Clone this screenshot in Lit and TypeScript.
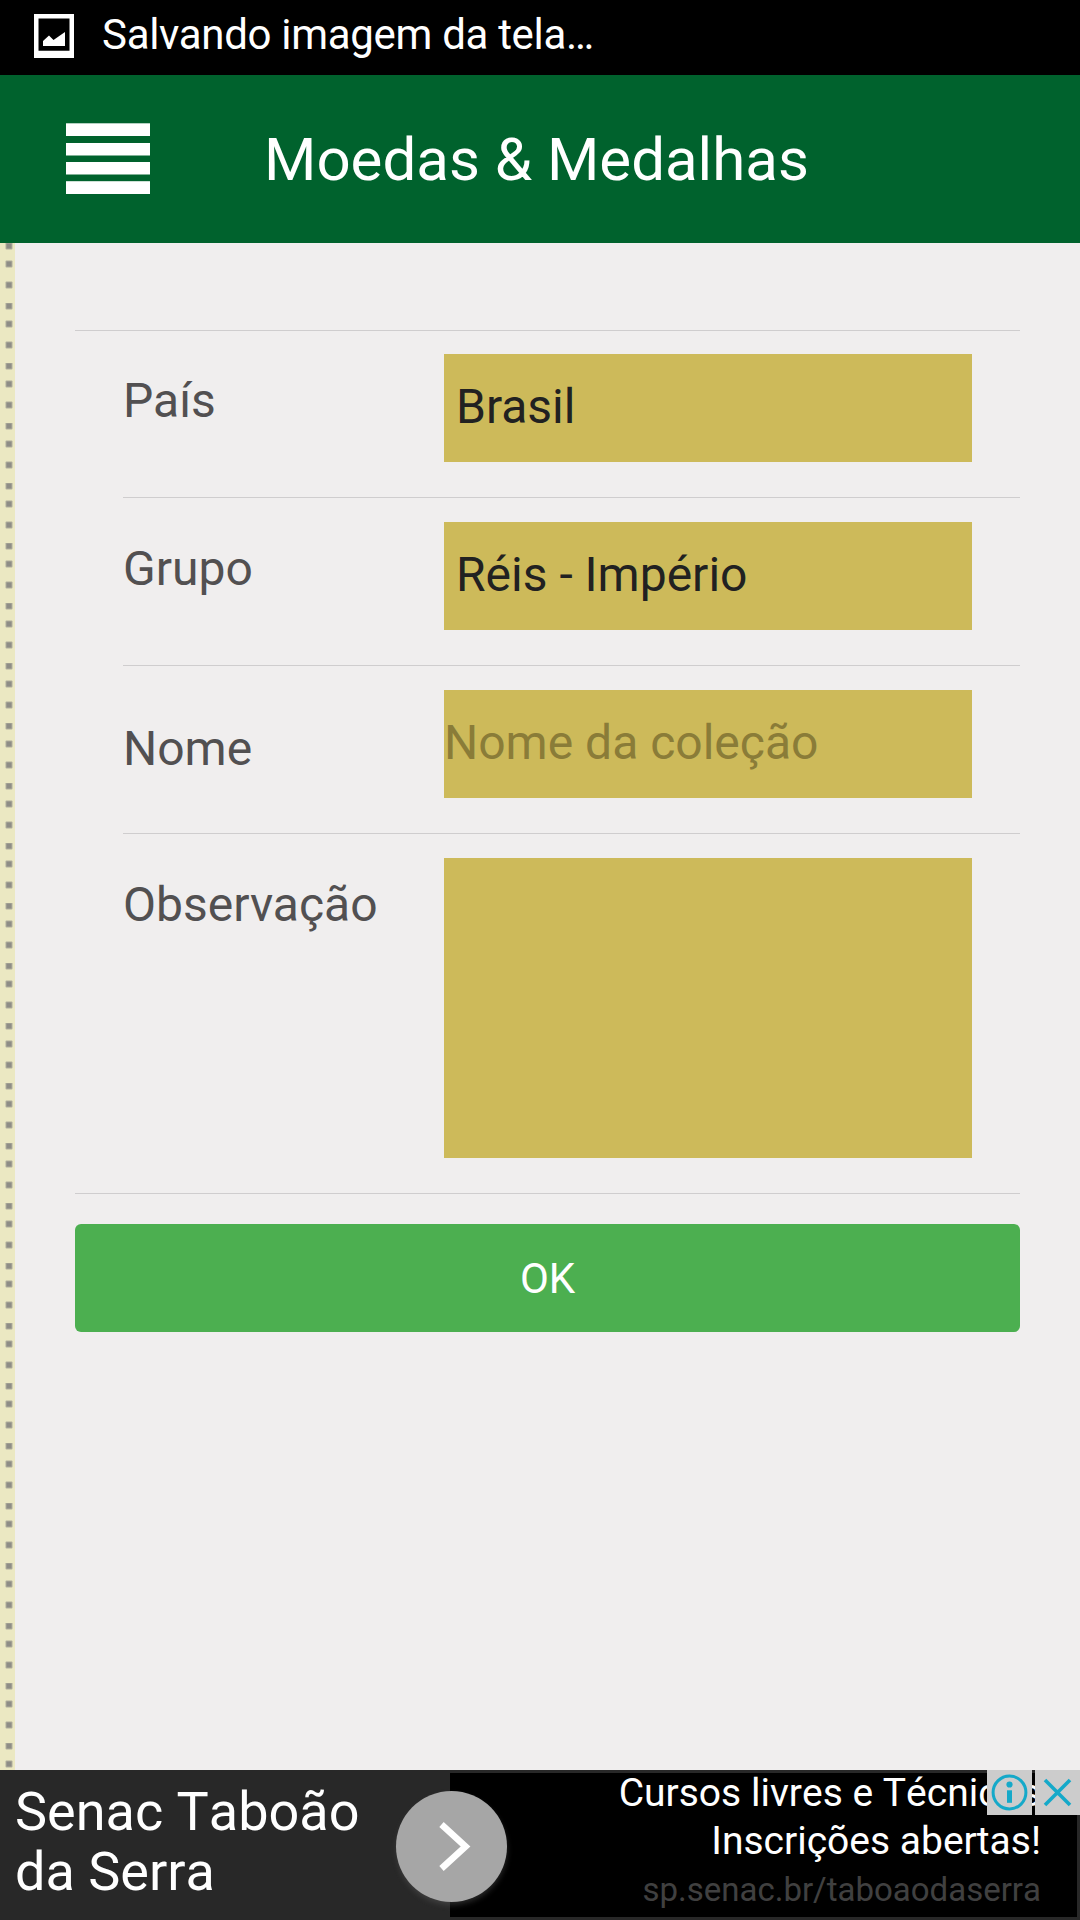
import { LitElement, html, css, svg } from "lit";
import { customElement } from "lit/decorators.js";

interface Field {
  label: string;
  kind: "select" | "input" | "area";
  value: string;
}

const fields: Field[] = [
  { label: "País", kind: "select", value: "Brasil" },
  { label: "Grupo", kind: "select", value: "Réis - Império" },
  { label: "Nome", kind: "input", value: "Nome da coleção" },
  { label: "Observação", kind: "area", value: "" },
];

@customElement("app-root")
export class AppRoot extends LitElement {
  static styles = css`
    :host {
      display: flex;
      flex-direction: column;
      width: 1080px;
      height: 1920px;
      overflow: hidden;
      background: #f0eeee;
      font-family: Roboto, "Liberation Sans", sans-serif;
      box-sizing: border-box;
    }
    * {
      box-sizing: border-box;
    }
    svg {
      display: block;
      flex: none;
    }
    .status {
      height: 75px;
      flex: none;
      background: #000;
      color: #fff;
      display: flex;
      align-items: flex-start;
      padding: 14px 0 0 34px;
      font-size: 42px;
      line-height: 44px;
      letter-spacing: -0.31px;
      white-space: nowrap;
    }
    .status span {
      margin: -1px 0 0 28px;
    }
    .bar {
      height: 168px;
      flex: none;
      background: #00622d;
      color: #fff;
      display: flex;
      align-items: flex-start;
      padding: 48px 0 0 66px;
    }
    .title {
      margin: 2px 0 0 114px;
      font-size: 60px;
      line-height: 70px;
      white-space: nowrap;
    }
    .main {
      flex: 1;
      min-height: 0;
      display: flex;
    }
    .content {
      flex: 1;
      padding: 87px 60px 0 60px;
    }
    .list {
      border-top: 1px solid #cfcdce;
      border-bottom: 1px solid #cfcdce;
    }
    .row {
      display: flex;
      justify-content: space-between;
      align-items: flex-start;
      margin-left: 48px;
      height: 168px;
      padding: 24px 48px 0 0;
      border-bottom: 1px solid #cfcdce;
    }
    .row:first-child {
      height: 167px;
      padding-top: 23px;
    }
    .row.area {
      height: 359px;
      border-bottom: none;
    }
    .label {
      margin-top: 19px;
      font-size: 48px;
      line-height: 56px;
      color: #525051;
    }
    .row.input .label {
      margin-top: 31px;
    }
    .field {
      width: 528px;
      height: 108px;
      background: #cdba5a;
      color: #212121;
      font-size: 48px;
      line-height: 106px;
      padding-left: 12px;
      white-space: nowrap;
    }
    .row.input .field {
      padding-left: 0;
      color: #8a7c38;
    }
    .row.area .field {
      height: 300px;
    }
    .ok {
      display: block;
      width: 100%;
      height: 108px;
      margin-top: 30px;
      padding: 2px 0 0;
      border: 0;
      border-radius: 6px;
      background: #4caf50;
      color: #fff;
      font: 42px/106px Roboto, "Liberation Sans", sans-serif;
      text-align: center;
    }
    .ad {
      position: relative;
      height: 150px;
      flex: none;
      background: #282828;
      color: #fff;
      display: flex;
      padding: 3px 3px 3px 0;
      font-kerning: none;
    }
    .advertiser {
      width: 450px;
      padding: 9px 0 0 15px;
      font-size: 54px;
      line-height: 60px;
      white-space: nowrap;
    }
    .offer {
      flex: 1;
      background: #000;
      text-align: right;
      padding: 0 36px 0 0;
      font-size: 39px;
      line-height: 48px;
      white-space: nowrap;
    }
    .lines {
      margin-top: -4px;
    }
    .url {
      padding-top: 1px;
      font-size: 33px;
      color: #404040;
    }
    .go {
      position: absolute;
      left: 386px;
      top: 11px;
    }
    .badges {
      position: absolute;
      right: 0;
      top: 0;
      display: flex;
      gap: 3px;
    }
  `;

  private strip() {
    return html`<svg width="15" height="1527">
      <defs>
        <pattern id="dots" width="15" height="60" patternUnits="userSpaceOnUse">
          <rect width="15" height="60" fill="#ebe8c2"></rect>
          ${[0, 18, 39].map(
            (y) => svg`<rect x="5.5" y=${y - 0.5} width="7" height="7" rx="1" fill="#b0ae9c"></rect>
              <rect x="6.5" y=${y + 0.5} width="5" height="5" fill="#8e8d86"></rect>`
          )}
        </pattern>
      </defs>
      <rect width="15" height="1527" fill="url(#dots)"></rect>
    </svg>`;
  }

  render() {
    return html`
      <div class="status">
        <svg width="40" height="44" viewBox="0 0 40 44">
          <path fill="#fff" fill-rule="evenodd" d="M0 0H40V44H0ZM4.5 4.5V36.7H35.5V4.5Z"></path>
          <path fill="#fff" d="M9 32V27L15 21.5L19.5 26L31 18V32Z"></path>
        </svg>
        <span>Salvando imagem da tela…</span>
      </div>
      <div class="bar">
        <svg width="84" height="71" viewBox="0 0 84 71" fill="#fff">
          <rect y="0.3" width="84" height="12.7"></rect>
          <rect y="20" width="84" height="12.5"></rect>
          <rect y="39" width="84" height="12.5"></rect>
          <rect y="58.2" width="84" height="12.8"></rect>
        </svg>
        <div class="title">Moedas &amp; Medalhas</div>
      </div>
      <div class="main">
        ${this.strip()}
        <div class="content">
          <div class="list">
            ${fields.map(
              (f) => html`<div class="row ${f.kind}">
                <div class="label">${f.label}</div>
                <div class="field">${f.value}</div>
              </div>`
            )}
          </div>
          <button class="ok">OK</button>
        </div>
      </div>
      <div class="ad">
        <div class="advertiser">Senac Taboão<br />da Serra</div>
        <div class="offer">
          <div class="lines">
            <div>Cursos livres e Técnicos</div>
            <div>Inscrições abertas!</div>
            <div class="url">sp.senac.br/taboaodaserra</div>
          </div>
        </div>
        <svg class="go" width="131" height="139" viewBox="0 0 131 139">
          <defs>
            <filter id="soft" x="-20%" y="-20%" width="140%" height="140%">
              <feGaussianBlur stdDeviation="3"></feGaussianBlur>
            </filter>
          </defs>
          <circle cx="66" cy="69" r="54.5" fill="#666" opacity="0.45" filter="url(#soft)"></circle>
          <circle cx="65.5" cy="65.5" r="55.5" fill="#a6a6a6"></circle>
          <path d="M55.5 43.5L79.6 65.5L55.5 87.5" fill="none" stroke="#fff" stroke-width="6.5"></path>
        </svg>
        <div class="badges">
          <svg width="45" height="45" viewBox="0 0 45 45">
            <rect width="45" height="45" fill="#cccccc"></rect>
            <circle cx="22.5" cy="22.5" r="16.4" fill="none" stroke="#15a9c9" stroke-width="3"></circle>
            <circle cx="22.5" cy="14.5" r="3.1" fill="#15a9c9"></circle>
            <rect x="20" y="20.3" width="5" height="12.5" fill="#15a9c9"></rect>
          </svg>
          <svg width="45" height="45" viewBox="0 0 45 45">
            <rect width="45" height="45" fill="#cccccc"></rect>
            <path d="M10 10L35 35M35 10L10 35" stroke="#15a9c9" stroke-width="3.6"></path>
          </svg>
        </div>
      </div>
    `;
  }
}
